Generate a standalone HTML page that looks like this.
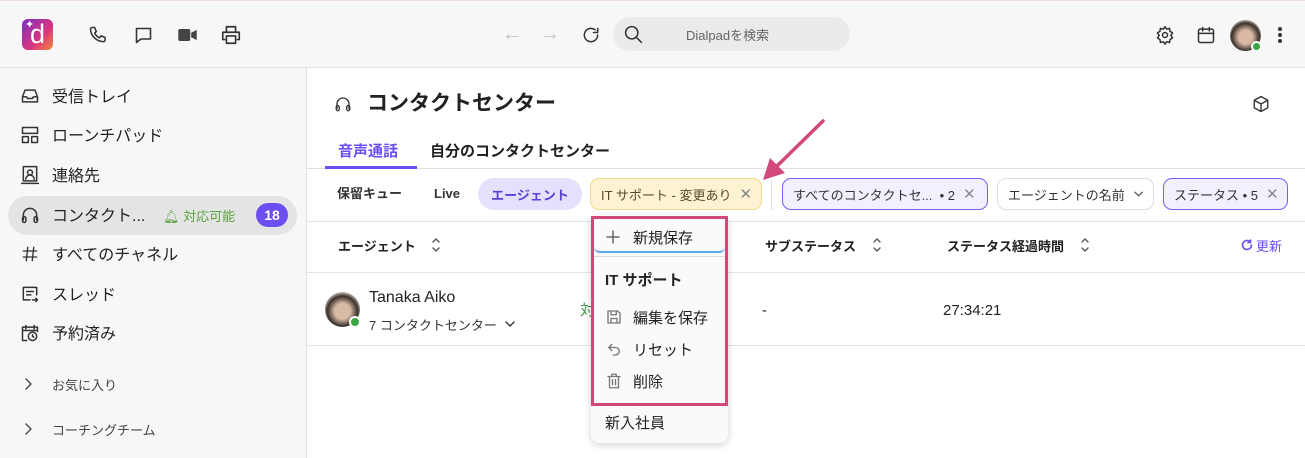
<!DOCTYPE html>
<html><head><meta charset="utf-8"><style>
*{box-sizing:border-box;margin:0;padding:0}
body{width:1305px;height:458px;overflow:hidden;background:#fff;font-family:"Liberation Sans","Noto Sans CJK JP",sans-serif;color:#222;position:relative}
.a{position:absolute;white-space:nowrap;line-height:1.375}
.t{transform:translateY(2px)}
svg{display:block}
.ic{position:absolute;fill:none;stroke:#333;stroke-width:1.8;stroke-linecap:round;stroke-linejoin:round}
.nav{font-size:16px;color:#222}
.pill{position:absolute;height:32px;border-radius:9px;font-size:13px;display:flex;align-items:center;padding:0 10px;white-space:nowrap}
.x{color:#888;margin-left:8px;font-size:15px}
.mi{font-size:15px;color:#222}
.srt{position:absolute;fill:none;stroke:#555;stroke-width:1.4;stroke-linecap:round;stroke-linejoin:round}
</style></head><body>
<!-- top bar -->
<div class="a" style="left:0;top:0;width:1305px;height:68px;background:#f7f7f7;border-top:1px solid #eedede;border-bottom:1px solid #e2e2e2"></div>
<div class="a" style="left:22px;top:19px;width:31px;height:31px;border-radius:6px;background:linear-gradient(135deg,#7b2fc9,#d9357d 60%,#f08a3a)"></div>
<div class="a" style="left:30px;top:19px;color:#fff;font-size:27px;line-height:31px">d</div>
<div class="a" style="left:25px;top:18px;color:#fff;font-size:11px">✦</div>
<svg class="ic" style="left:88px;top:25px" width="20" height="20" viewBox="0 0 24 24"><path d="M5 3h3l2 5-2 1.5a11 11 0 0 0 6 6L15.5 13l5 2v3a2 2 0 0 1-2 2A16 16 0 0 1 3 5a2 2 0 0 1 2-2z"/></svg>
<svg class="ic" style="left:133px;top:25px" width="21" height="21" viewBox="0 0 24 24"><path d="M4 4h16v12H9l-5 4z"/></svg>
<svg style="position:absolute;left:178px;top:29px" width="19" height="12" viewBox="0 0 20 13"><rect x="0" y="0" width="13" height="13" rx="2" fill="#444"/><path d="M14 4l6-3v11l-6-3z" fill="#444"/></svg>
<svg class="ic" style="left:220px;top:24px" width="22" height="22" viewBox="0 0 24 24"><path d="M7 8V3h10v5M5 17H3V9h18v8h-2M7 13h10v8H7z"/></svg>
<div class="a" style="left:502px;top:21px;color:#c4c4c4;font-size:20px">←</div>
<div class="a" style="left:540px;top:21px;color:#c4c4c4;font-size:20px">→</div>
<svg class="ic" style="left:581px;top:25px" width="20" height="20" viewBox="0 0 24 24"><path d="M20 12a8 8 0 1 1-3-6.2M20 4v5h-5"/></svg>
<div class="a" style="left:613px;top:17px;width:237px;height:34px;border-radius:17px;background:#ebebeb"></div>
<svg class="ic" style="left:623px;top:24px" width="21" height="21" viewBox="0 0 24 24"><circle cx="10" cy="10" r="7"/><path d="M15 15l6 6"/></svg>
<div class="a t" style="left:686px;top:25px;font-size:13px;color:#666">Dialpadを検索</div>
<svg class="ic" style="left:1155px;top:25px" width="20" height="20" viewBox="0 0 24 24"><circle cx="12" cy="12" r="3"/><path d="M12 2l2 3 3.5-1 .5 3.5 3 2-2 3 2 3-3 2-.5 3.5-3.5-1-2 3-2-3-3.5 1L6 17.5l-3-2 2-3-2-3 3-2 .5-3.5 3.5 1z"/></svg>
<svg class="ic" style="left:1196px;top:25px" width="20" height="20" viewBox="0 0 24 24"><rect x="3" y="5" width="18" height="16" rx="2"/><path d="M3 10h18M8 3v4M16 3v4"/></svg>
<div class="a" style="left:1230px;top:20px;width:31px;height:31px;border-radius:50%;background:radial-gradient(circle at 50% 55%,#d9b9a3 30%,#3a302a 60%,#bdb7b0 75%)"></div>
<div class="a" style="left:1251px;top:41px;width:11px;height:11px;border-radius:50%;background:#3aa545;border:2px solid #f7f7f7"></div>
<div class="a" style="left:1278px;top:27px;width:4px;height:4px;border-radius:50%;background:#333;box-shadow:0 6px 0 #333,0 12px 0 #333"></div>

<!-- sidebar -->
<div class="a" style="left:0;top:68px;width:307px;height:390px;background:#f7f7f7;border-right:1px solid #e2e2e2"></div>
<div class="a" style="left:8px;top:196px;width:289px;height:39px;border-radius:20px;background:#e4e4e4"></div>
<svg class="ic" style="left:20px;top:86px" width="20" height="20" viewBox="0 0 24 24"><path d="M3 13l3-8h12l3 8v6H3zM3 13h5l1 2h6l1-2h5"/></svg>
<div class="a nav t" style="left:52px;top:85px">受信トレイ</div>
<svg class="ic" style="left:20px;top:125px" width="20" height="20" viewBox="0 0 24 24"><rect x="3" y="3" width="18" height="7"/><rect x="3" y="14" width="7" height="7"/><rect x="14" y="14" width="7" height="7"/></svg>
<div class="a nav t" style="left:52px;top:124px">ローンチパッド</div>
<svg class="ic" style="left:20px;top:165px" width="20" height="20" viewBox="0 0 24 24"><rect x="4" y="2" width="16" height="17"/><circle cx="12" cy="9" r="3"/><path d="M7 17a5 5 0 0 1 10 0M2 22h20"/></svg>
<div class="a nav t" style="left:52px;top:164px">連絡先</div>
<svg class="ic" style="left:20px;top:205px" width="20" height="20" viewBox="0 0 24 24"><path d="M4 18v-6a8 8 0 0 1 16 0v6"/><rect x="3" y="14" width="4" height="7" rx="2"/><rect x="17" y="14" width="4" height="7" rx="2"/></svg>
<div class="a nav t" style="left:52px;top:204px">コンタクト...</div>
<div class="a t" style="left:163px;top:206px;font-size:13px;color:#5aa33e">🔔︎ 対応可能</div>
<div class="a" style="left:256px;top:203px;width:32px;height:24px;border-radius:12px;background:#6c4ef0;color:#fff;font-size:14px;font-weight:bold;text-align:center;line-height:24px">18</div>
<svg class="ic" style="left:21px;top:245px" width="18" height="18" viewBox="0 0 24 24"><path d="M9 3L7 21M17 3l-2 18M3 8h18M3 16h18"/></svg>
<div class="a nav t" style="left:52px;top:243px">すべてのチャネル</div>
<svg class="ic" style="left:20px;top:284px" width="20" height="20" viewBox="0 0 24 24"><path d="M12 19H4V4h16v9M8 9h8M8 13h5M15 19h6l-2-2M21 19l-2 2"/></svg>
<div class="a nav t" style="left:52px;top:283px">スレッド</div>
<svg class="ic" style="left:20px;top:323px" width="20" height="20" viewBox="0 0 24 24"><path d="M8 21H3V5h18v5M3 9h18M7 3v4M17 3v4"/><circle cx="15" cy="16" r="5"/><path d="M15 14v2l1.5 1"/></svg>
<div class="a nav t" style="left:52px;top:322px">予約済み</div>
<svg class="srt" style="left:24px;top:378px;stroke:#444" width="8" height="12" viewBox="0 0 8 12"><path d="M2 1l5 5-5 5"/></svg>
<div class="a t" style="left:52px;top:375px;font-size:13px;color:#444">お気に入り</div>
<svg class="srt" style="left:24px;top:423px;stroke:#444" width="8" height="12" viewBox="0 0 8 12"><path d="M2 1l5 5-5 5"/></svg>
<div class="a t" style="left:52px;top:420px;font-size:13px;color:#444">コーチングチーム</div>

<!-- main -->
<svg class="ic" style="left:334px;top:95px" width="18" height="18" viewBox="0 0 24 24"><path d="M4 18v-6a8 8 0 0 1 16 0v6"/><rect x="3" y="14" width="4" height="7" rx="2"/><rect x="17" y="14" width="4" height="7" rx="2"/></svg>
<div class="a t" style="left:367px;top:88px;font-size:21px;font-weight:bold">コンタクトセンター</div>
<svg class="ic" style="left:1252px;top:95px" width="18" height="18" viewBox="0 0 24 24"><path d="M12 2l9 5v10l-9 5-9-5V7zM3 7l9 5 9-5M12 12v10"/></svg>
<div class="a t" style="left:338px;top:140px;font-size:15px;font-weight:bold;color:#6c4ef0">音声通話</div>
<div class="a t" style="left:430px;top:140px;font-size:15px;font-weight:bold;color:#222">自分のコンタクトセンター</div>
<div class="a" style="left:307px;top:168px;width:998px;height:1px;background:#e0e0e0"></div>
<div class="a" style="left:325px;top:166px;width:92px;height:3px;background:#6c4ef0"></div>

<div class="a" style="left:337px;top:185px;font-size:13px;font-weight:bold;color:#333">保留キュー</div>
<div class="a" style="left:434px;top:185px;font-size:13px;font-weight:bold;color:#333">Live</div>
<div class="pill" style="left:478px;top:178px;width:104px;background:#e6e0fc;color:#5a3fd8;font-weight:bold;border-radius:16px;justify-content:center">エージェント</div>
<div class="pill" style="left:590px;top:178px;width:172px;background:#fdf3d2;border:1px solid #f0d98a;color:#5a4a2a">IT サポート - 変更あり<span class="x">✕</span></div>
<div class="a" style="left:771px;top:180px;width:1px;height:30px;background:#ddd"></div>
<div class="pill" style="left:782px;top:178px;width:206px;background:#f3f0fe;border:1px solid #7c5cf0;color:#333">すべてのコンタクトセ...&nbsp; • 2<span class="x">✕</span></div>
<div class="pill" style="left:997px;top:178px;width:157px;background:#fff;border:1px solid #ddd;color:#333">エージェントの名前<svg class="srt" style="position:static;margin-left:9px" width="10" height="6" viewBox="0 0 10 6"><path d="M1 1l4 4 4-4"/></svg></div>
<div class="pill" style="left:1163px;top:178px;width:125px;background:#f3f0fe;border:1px solid #7c5cf0;color:#333">ステータス • 5<span class="x">✕</span></div>

<div class="a" style="left:307px;top:221px;width:998px;height:1px;background:#e3e3e3"></div>
<div class="a t" style="left:338px;top:236px;font-size:13px;font-weight:bold">エージェント</div>
<svg class="srt" style="left:432px;top:238px" width="8" height="14" viewBox="0 0 8 14"><path d="M1 4l3-3 3 3M1 10l3 3 3-3"/></svg>
<div class="a t" style="left:765px;top:236px;font-size:13px;font-weight:bold">サブステータス</div>
<svg class="srt" style="left:873px;top:238px" width="8" height="14" viewBox="0 0 8 14"><path d="M1 4l3-3 3 3M1 10l3 3 3-3"/></svg>
<div class="a t" style="left:947px;top:236px;font-size:13px;font-weight:bold">ステータス経過時間</div>
<svg class="srt" style="left:1081px;top:238px" width="8" height="14" viewBox="0 0 8 14"><path d="M1 4l3-3 3 3M1 10l3 3 3-3"/></svg>
<svg class="srt" style="left:1241px;top:239px;stroke:#6c4ef0;stroke-width:1.6" width="12" height="12" viewBox="0 0 12 12"><path d="M10.5 6A4.5 4.5 0 1 1 9 2.6M9.5 1v2.5H7"/></svg>
<div class="a t" style="left:1256px;top:236px;font-size:13px;color:#6c4ef0">更新</div>
<div class="a" style="left:307px;top:272px;width:998px;height:1px;background:#e3e3e3"></div>
<div class="a" style="left:325px;top:292px;width:35px;height:35px;border-radius:50%;background:radial-gradient(circle at 50% 55%,#d8bba5 30%,#3a302a 58%,#cfcac3 75%)"></div>
<div class="a" style="left:349px;top:316px;width:12px;height:12px;border-radius:50%;background:#3aa545;border:2px solid #fff"></div>
<div class="a t" style="left:369px;top:285px;font-size:16px">Tanaka Aiko</div>
<div class="a t" style="left:369px;top:315px;font-size:13px;color:#333">7 コンタクトセンター</div>
<svg class="srt" style="left:505px;top:321px;stroke:#333" width="10" height="6" viewBox="0 0 10 6"><path d="M1 1l4 4 4-4"/></svg>
<div class="a t" style="left:580px;top:299px;font-size:15px;color:#3a9a4a">対</div>
<div class="a t" style="left:762px;top:299px;font-size:15px">-</div>
<div class="a t" style="left:943px;top:299px;font-size:15px">27:34:21</div>
<div class="a" style="left:307px;top:345px;width:998px;height:1px;background:#e3e3e3"></div>

<!-- dropdown -->
<div class="a" style="left:591px;top:215px;width:137px;height:228px;background:#fafafa;border-radius:8px;box-shadow:0 2px 8px rgba(0,0,0,.18)"></div>
<div class="a" style="left:594px;top:218px;width:131px;height:35px;border-bottom:2px solid #5aa7e8;border-radius:0 0 6px 6px"></div>
<div class="a" style="left:593px;top:256px;width:133px;height:1px;background:#ddd"></div>
<svg class="ic" style="left:606px;top:230px;stroke:#666;stroke-width:1.5" width="14" height="14" viewBox="0 0 14 14"><path d="M7 1v12M1 7h12"/></svg>
<div class="a mi t" style="left:633px;top:227px">新規保存</div>
<div class="a mi t" style="left:605px;top:269px;font-weight:bold">IT サポート</div>
<svg class="ic" style="left:605px;top:308px;stroke:#777" width="18" height="18" viewBox="0 0 24 24"><path d="M4 4h13l3 3v13H4zM8 4v5h7V4M8 20v-6h8v6"/></svg>
<div class="a mi t" style="left:633px;top:307px">編集を保存</div>
<svg class="ic" style="left:605px;top:340px;stroke:#777" width="18" height="18" viewBox="0 0 24 24"><path d="M9 6L5 10l4 4M5 10h9a5 5 0 0 1 0 10h-3"/></svg>
<div class="a mi t" style="left:633px;top:339px">リセット</div>
<svg class="ic" style="left:605px;top:372px;stroke:#777" width="18" height="18" viewBox="0 0 24 24"><path d="M4 6h16M9 6V3h6v3M6 6v15h12V6M10 10v7M14 10v7"/></svg>
<div class="a mi t" style="left:633px;top:371px">削除</div>
<div class="a mi t" style="left:605px;top:412px">新入社員</div>
<div class="a" style="left:591px;top:216px;width:137px;height:190px;border:3px solid #d2487b"></div>

<!-- arrow -->
<svg style="position:absolute;left:0;top:0" width="1305" height="458"><line x1="823" y1="121" x2="775" y2="168" stroke="#d2487b" stroke-width="3.5" stroke-linecap="round"/><path d="M763 180L770 158L785 173Z" fill="#d2487b"/></svg>
</body></html>
